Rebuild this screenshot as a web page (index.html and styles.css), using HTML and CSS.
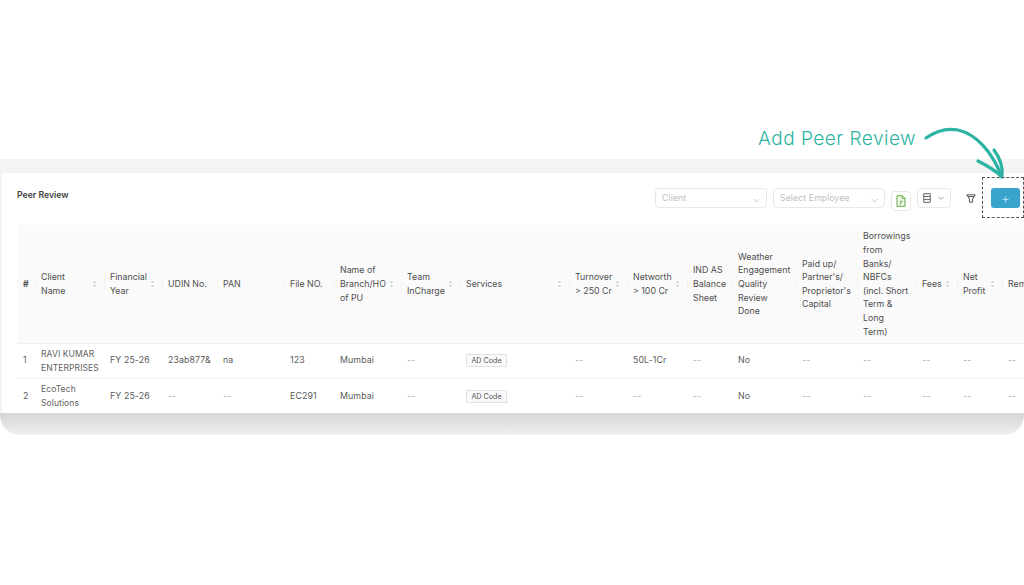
FILE: index.html
```html
<!DOCTYPE html>
<html lang="en">
<head>
<meta charset="utf-8">
<title>Peer Review</title>
<link rel="stylesheet" href="styles.css">
</head>
<body>
<svg width="0" height="0" class="defs"><defs>
<symbol id="sort" viewBox="0 0 6 9"><path d="M3 .5 5.2 3.4H.8Z M3 8.5 .8 5.6h4.4Z" fill="#d0d0d0"/></symbol>
<symbol id="chev" viewBox="0 0 10 6"><path d="M1 1 5 5 9 1" fill="none" stroke="#b0b0b0" stroke-width="1"/></symbol>
<symbol id="chev-dark" viewBox="0 0 10 6"><path d="M1 1 5 5 9 1" fill="none" stroke="#707070" stroke-width="1.1"/></symbol>
</defs></svg>
<main class="frame">
  <section class="card">
    <header class="toolbar">
      <h1 class="title">Peer Review</h1>
      <div class="tools">
        <div class="select"><span>Client</span><svg class="chev"><use href="#chev"/></svg></div>
        <div class="select"><span>Select Employee</span><svg class="chev"><use href="#chev"/></svg></div>
        <button class="icon-btn pdf" aria-label="Export"><svg width="10" height="12" viewBox="0 0 10 12"><path d="M1 .7h5.4L9 3.3v8H1Z" fill="#eef6e6" stroke="#62a844"/><path d="M6 .9v2.6h2.8M5.4 5.4 4.4 9.6M4.4 6.6h2" fill="none" stroke="#62a844" stroke-width=".9"/></svg></button>
        <button class="col-btn" aria-label="Columns"><svg width="8" height="10" viewBox="0 0 8 10"><path d="M.7.7h6.6v8.6H.7ZM.7 3.5h6.6M.7 6.4h6.6" fill="none" stroke="#666" stroke-width="1"/></svg><svg class="chev small"><use href="#chev-dark"/></svg></button>
        <button class="filter" aria-label="Filter"><svg width="10" height="9" viewBox="0 0 10 9"><path d="M.7.8h8.6L6.6 4.8v3.4H3.4V4.8Z M1.8 2.6h6.4" fill="none" stroke="#555" stroke-width="1"/></svg></button>
        <button class="add" aria-label="Add">+</button>
      </div>
    </header>
    <div class="table-wrap">
      <table class="grid">
        <colgroup>
          <col class="c18"><col class="c69"><col class="c58"><col class="c55"><col class="c67"><col class="c50"><col class="c67"><col class="c59"><col class="c109"><col class="c58"><col class="c60"><col class="c45"><col class="c64"><col class="c61"><col class="c59"><col class="c41"><col class="c45"><col class="c80">
        </colgroup>
        <thead>
          <tr>
            <th class="strong"><div class="th">#</div></th>
            <th><div class="th"><span>Client<br>Name</span><svg class="sort"><use href="#sort"/></svg></div></th>
            <th><div class="th"><span>Financial<br>Year</span><svg class="sort"><use href="#sort"/></svg></div></th>
            <th><div class="th"><span>UDIN No.</span></div></th>
            <th><div class="th"><span>PAN</span></div></th>
            <th><div class="th"><span>File NO.</span></div></th>
            <th><div class="th"><span>Name of<br>Branch/HO<br>of PU</span><svg class="sort"><use href="#sort"/></svg></div></th>
            <th><div class="th"><span>Team<br>InCharge</span><svg class="sort"><use href="#sort"/></svg></div></th>
            <th><div class="th"><span>Services</span><svg class="sort"><use href="#sort"/></svg></div></th>
            <th><div class="th"><span>Turnover<br>&gt; 250 Cr</span><svg class="sort"><use href="#sort"/></svg></div></th>
            <th><div class="th"><span>Networth<br>&gt; 100 Cr</span><svg class="sort"><use href="#sort"/></svg></div></th>
            <th><div class="th"><span>IND AS<br>Balance<br>Sheet</span></div></th>
            <th><div class="th"><span>Weather<br>Engagement<br>Quality<br>Review<br>Done</span></div></th>
            <th><div class="th"><span>Paid up/<br>Partner's/<br>Proprietor's<br>Capital</span></div></th>
            <th><div class="th"><span>Borrowings<br>from<br>Banks/<br>NBFCs<br>(incl. Short<br>Term &amp;<br>Long<br>Term)</span></div></th>
            <th><div class="th"><span>Fees</span><svg class="sort"><use href="#sort"/></svg></div></th>
            <th><div class="th"><span>Net<br>Profit</span><svg class="sort"><use href="#sort"/></svg></div></th>
            <th><div class="th"><span>Remarks</span></div></th>
          </tr>
        </thead>
        <tbody>
          <tr>
            <td>1</td><td class="name">RAVI KUMAR<br>ENTERPRISES</td><td>FY 25-26</td><td>23ab877&amp;</td><td>na</td><td>123</td><td>Mumbai</td><td class="dim">--</td><td><span class="tag">AD Code</span></td><td class="dim">--</td><td>50L-1Cr</td><td class="dim">--</td><td>No</td><td class="dim">--</td><td class="dim">--</td><td class="dim">--</td><td class="dim">--</td><td class="dim">--</td>
          </tr>
          <tr>
            <td>2</td><td class="name">EcoTech<br>Solutions</td><td>FY 25-26</td><td class="dim">--</td><td class="dim">--</td><td>EC291</td><td>Mumbai</td><td class="dim">--</td><td><span class="tag">AD Code</span></td><td class="dim">--</td><td class="dim">--</td><td class="dim">--</td><td>No</td><td class="dim">--</td><td class="dim">--</td><td class="dim">--</td><td class="dim">--</td><td class="dim">--</td>
          </tr>
        </tbody>
      </table>
    </div>
  </section>
</main>
<div class="callout">Add Peer Review</div>
<svg class="arrow" width="90" height="60" viewBox="0 0 90 60"><path d="M2 12C12 5 24 2 34 4 52 8 68 26 77 49" fill="none" stroke="#2cb3a3" stroke-width="3.2" stroke-linecap="round"/><path d="M54 35C62 39 71 44 78 51 79 42 76 32 70 24" fill="none" stroke="#2cb3a3" stroke-width="3.2" stroke-linecap="round" stroke-linejoin="round"/></svg>
<div class="highlight"></div>
</body>
</html>
```
FILE: styles.css
```css
* { box-sizing: border-box; }
html, body { margin: 0; height: 100%; overflow: hidden; background: #fff; }
body { padding-top: 159px; font-family: Inter, "Liberation Sans", sans-serif; color: #4a4a4a; position: relative; }
.defs { position: absolute; }
.frame { height: 276px; background: linear-gradient(#f4f4f4 0 254px, #d6d6d6 254px, #efefef 100%); border-radius: 0 0 20px 20px; padding: 14px 0 22px 2px; }
.card { height: 240px; background: #fff; border-radius: 3px 0 0 3px; padding-left: 15px; display: flex; flex-direction: column; }
.toolbar { height: 52px; flex: none; display: flex; justify-content: space-between; }
.title { margin: 17px 0 0; font-size: 8.7px; line-height: 11px; font-weight: 600; color: #444; }
.tools { display: flex; align-items: flex-start; padding: 15px 4px 0 0; }
.select { width: 112px; height: 20px; border: 1px solid #e8e8e8; border-radius: 4px; margin-right: 6px; padding: 0 6px 0 6px; display: flex; align-items: center; justify-content: space-between; font-size: 8.5px; color: #c0c0c0; letter-spacing: .2px; }
.chev { width: 7px; height: 5px; margin-top: 4px; }
.chev.small { width: 6px; height: 4px; margin: 0; }
button { padding: 0; margin: 0; font-family: inherit; }
.icon-btn { width: 20px; height: 20px; margin: 3px 6px 0 0; border: 1px solid #e8e8e8; border-radius: 4px; background: #fff; display: flex; align-items: center; justify-content: center; }
.col-btn { width: 34px; height: 20px; margin-right: 10px; border: 1px solid #e8e8e8; border-radius: 4px; background: #fff; display: flex; align-items: center; justify-content: space-between; padding: 0 6px 0 5px; }
.filter { width: 20px; height: 20px; margin-right: 10px; border: 0; background: #fff; display: flex; align-items: center; justify-content: center; }
.add { width: 29px; height: 20px; border: 0; border-radius: 3px; background: #3aa5cc; color: #cfeaf4; font-size: 13px; line-height: 20px; font-weight: 300; }
.table-wrap { flex: 1; overflow: hidden; }
.grid { width: 1007px; border-collapse: collapse; table-layout: fixed; font-size: 8.8px; line-height: 13.6px; }
.c18 { width: 18px; } .c41 { width: 41px; } .c45 { width: 45px; } .c50 { width: 50px; } .c55 { width: 55px; } .c58 { width: 58px; } .c59 { width: 59px; } .c60 { width: 60px; } .c61 { width: 61px; } .c64 { width: 64px; } .c67 { width: 67px; } .c69 { width: 69px; } .c80 { width: 22px; } .c109 { width: 109px; }
th { height: 118px; padding: 0 6px; background: #fafafa; border-bottom: 1px solid #f0f0f0; font-weight: 400; text-align: left; color: #4f4f4f; position: relative; white-space: nowrap; overflow: hidden; }
th + th::before { content: ""; position: absolute; left: 0; top: 50%; height: 12px; margin-top: -6px; width: 1px; background: #f2f2f2; }
th.strong { font-weight: 700; }
.th { display: flex; align-items: center; justify-content: space-between; }
.sort { width: 5px; height: 8px; flex: none; margin-right: 1px; }
td { height: 35px; padding: 0 6px; border-bottom: 1px solid #f3f3f3; color: #5a5a5a; letter-spacing: .1px; white-space: nowrap; overflow: hidden; }
tbody tr:first-child td { padding-bottom: 2px; }
tbody tr:last-child td { border-bottom: 0; height: 35px; }
td.name, tbody tr:first-child td.name { font-size: 8.5px; color: #5f5f5f; padding-top: 2px; padding-bottom: 0; }
td.dim { color: #ababab; }
.tag { display: inline-block; height: 13px; line-height: 11px; padding: 0 4.4px; border: 1px solid #e0e0e0; background: #fafafa; border-radius: 1px; font-size: 7.2px; letter-spacing: 0; color: #555; }
.callout { position: absolute; left: 758px; top: 126px; font-size: 19px; line-height: 26px; font-weight: 300; letter-spacing: .5px; color: #2cb3a3; white-space: nowrap; }
.arrow { position: absolute; left: 924px; top: 126px; }
.highlight { position: absolute; left: 982px; top: 177px; width: 42px; height: 41px; border: 1px dashed #555; }
```
